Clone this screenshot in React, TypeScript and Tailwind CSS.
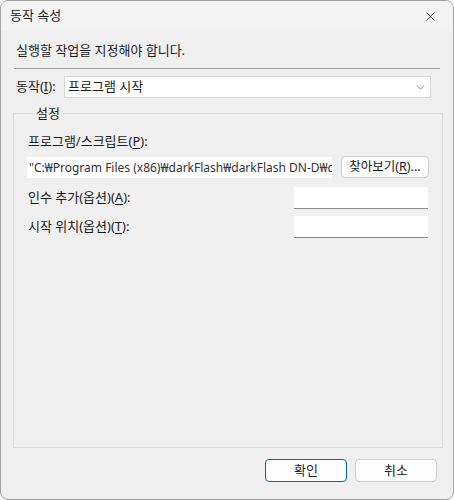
import { ChevronDown, X } from 'lucide-react';

const font = { fontFamily: '"Noto Sans", "Noto Sans CJK KR", sans-serif' };

function Key({ k }: { k: string }) {
  return <span className="underline underline-offset-2">{k}</span>;
}

export default function App() {
  return (
    <div className="w-[454px] h-[500px] bg-[#f9f9f9]" style={font}>
      <div className="w-[454px] h-[500px] flex flex-col rounded-lg border border-[#a3a3a3] bg-[#f0f0f0] overflow-hidden text-[13px] text-[#1b1b1b]">
        {/* title bar */}
        <div className="h-[30px] flex items-center bg-[#f3f3f3] pl-[9px] shrink-0">
          <span className="flex-1 text-[13px]">동작 속성</span>
          <div className="w-[46px] h-[30px] flex items-center justify-center">
            <X size={15} strokeWidth={1.2} className="text-[#1b1b1b]" />
          </div>
        </div>

        <div className="flex-1 flex flex-col px-[12px]">
          <p className="pl-[3px] mt-[11px] leading-[16px]">실행할 작업을 지정해야 합니다.</p>
          <div className="mt-[10px] h-px bg-[#a0a0a0] mx-px" />

          <div className="mt-[7px] flex items-center">
            <span className="pl-[3px] w-[51px]">
              동작(<Key k="I" />):
            </span>
            <div className="w-[367px] h-[22px] bg-white border border-[#d9d9d9] flex items-center pl-[3px] pr-[3px]">
              <span className="flex-1">프로그램 시작</span>
              <ChevronDown size={13} strokeWidth={1.2} className="text-[#555]" />
            </div>
          </div>

          <fieldset className="mt-[8px] h-[342px] border border-[#dcdcdc] px-[13px] pb-0">
            <legend className="ml-[6px] px-[3px] leading-[14px]">설정</legend>
            <div className="mt-[13px] leading-[16px] pl-px">
              프로그램/스크립트(<Key k="P" />):
            </div>
            <div className="mt-[7px] flex items-center">
              <div className="w-[305px] h-[21px] bg-white overflow-hidden whitespace-nowrap pl-[2px] leading-[21px] text-[12px] text-[#333]">
                "C:₩Program Files (x86)₩darkFlash₩darkFlash DN-D₩darkFlash.exe"
              </div>
              <button className="ml-[9px] w-[88px] h-[22px] bg-[#fdfdfd] border border-[#d0d0d0] rounded-[4px] text-[12.5px] leading-[20px] px-0 whitespace-nowrap">
                찾아보기(<Key k="R" />)...
              </button>
            </div>
            <div className="mt-[9px] flex items-center">
              <span className="flex-1 pl-px">
                인수 추가(옵션)(<Key k="A" />):
              </span>
              <div className="w-[134px] h-[22px] bg-white border-b border-[#8a8a8a] mr-px" />
            </div>
            <div className="mt-[7px] flex items-center">
              <span className="flex-1 pl-px">
                시작 위치(옵션)(<Key k="T" />):
              </span>
              <div className="w-[134px] h-[22px] bg-white border-b border-[#8a8a8a] mr-px" />
            </div>
          </fieldset>

          <div className="mt-[11px] flex justify-end gap-[8px] pr-[4px]">
            <button className="w-[82px] h-[23px] bg-[#fdfdfd] border border-[#0067c0] rounded-[4px]">
              확인
            </button>
            <button className="w-[82px] h-[23px] bg-[#fdfdfd] border border-[#d0d0d0] rounded-[4px]">
              취소
            </button>
          </div>
        </div>
      </div>
    </div>
  );
}
